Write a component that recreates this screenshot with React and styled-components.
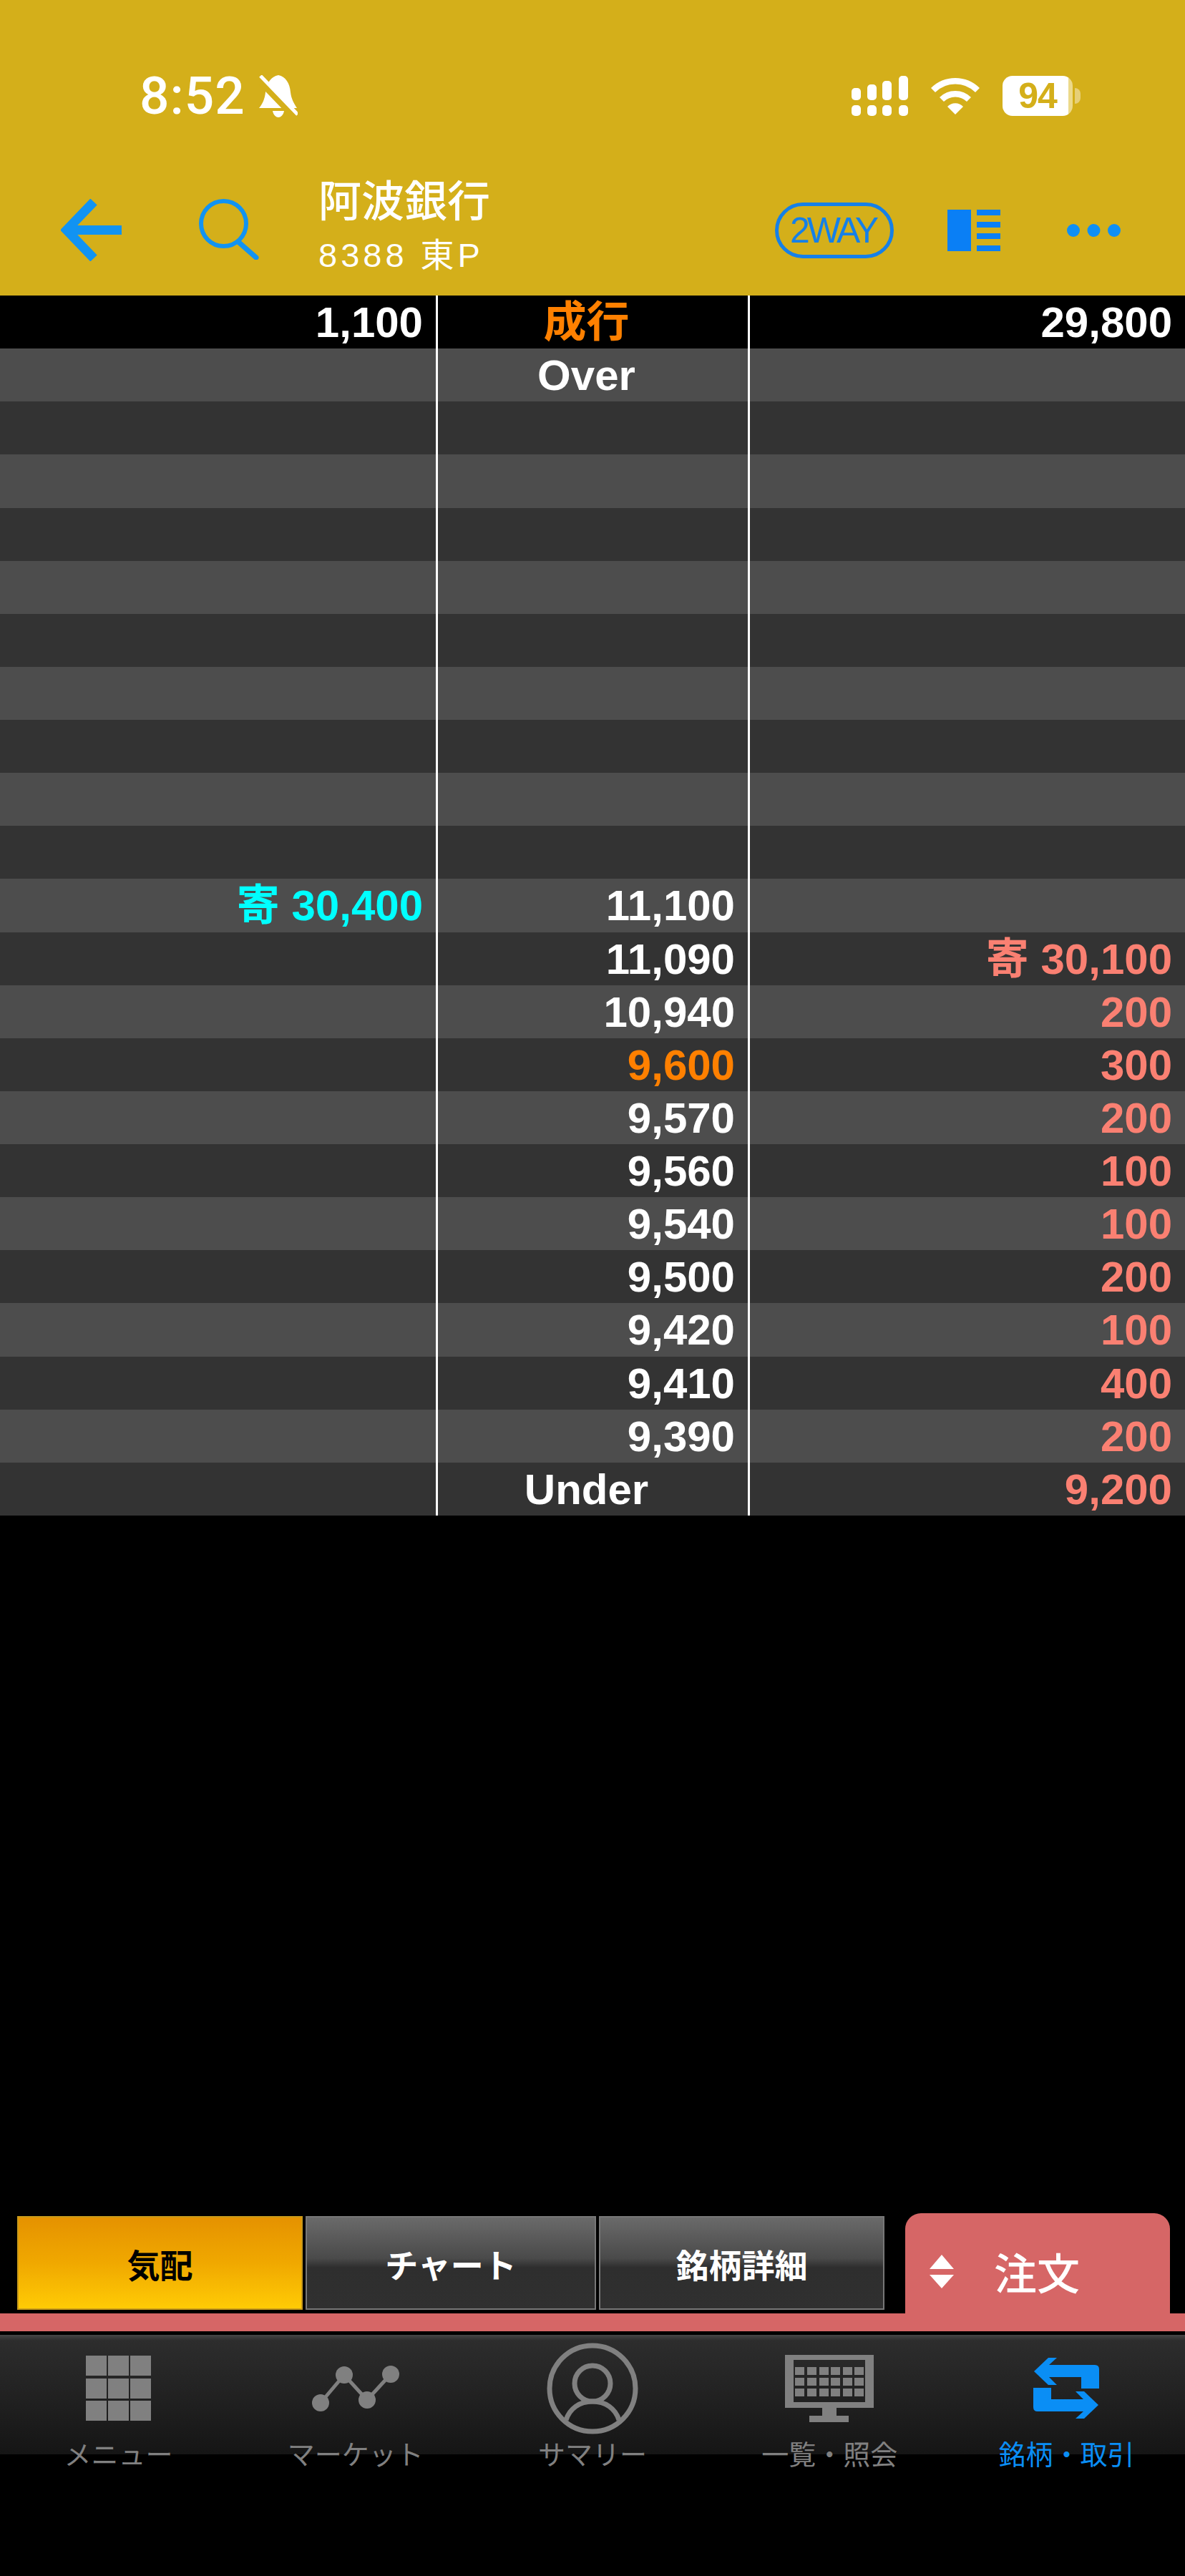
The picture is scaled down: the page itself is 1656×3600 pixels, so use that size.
// board screen (price ladder) for 8388
import React from "react";
import styled, { createGlobalStyle } from "styled-components";

const SANS = `"Liberation Sans", "Noto Sans CJK JP", sans-serif`;
const JP = `"Noto Sans CJK JP", "Liberation Sans", sans-serif`;

const rows = [
  { left: "1,100", mid: "成行", right: "29,800", top: true, midTone: "orange", center: true },
  { mid: "Over", center: true },
  {}, {}, {}, {}, {}, {}, {}, {}, {},
  { left: "寄 30,400", leftTone: "cyan", mid: "11,100" },
  { mid: "11,090", right: "寄 30,100" },
  { mid: "10,940", right: "200" },
  { mid: "9,600", midTone: "orange", right: "300" },
  { mid: "9,570", right: "200" },
  { mid: "9,560", right: "100" },
  { mid: "9,540", right: "100" },
  { mid: "9,500", right: "200" },
  { mid: "9,420", right: "100" },
  { mid: "9,410", right: "400" },
  { mid: "9,390", right: "200" },
  { mid: "Under", center: true, right: "9,200" },
];

const TONES = {
  white: "#ffffff",
  orange: "#ff8000",
  cyan: "#00ffff",
  salmon: "#fa8072",
};

const BackArrow = () => (
  <BackIcon viewBox="0 0 85 87">
    <path d="M46 4 L8 43.5 L46 83" fill="none" stroke="#1193f2" strokeWidth="13" />
    <rect x="8" y="37" width="77" height="13" fill="#1193f2" />
  </BackIcon>
);

const Magnifier = () => (
  <SearchIcon viewBox="0 0 84 85">
    <circle cx="34.5" cy="34.5" r="31.5" fill="none" stroke="#1193f2" strokeWidth="6" />
    <path d="M55 60 L80 82" stroke="#1193f2" strokeWidth="7" strokeLinecap="round" />
  </SearchIcon>
);

const BellSlash = () => (
  <BellIcon viewBox="0 0 55 59">
    <path d="M28 0 C38 2 44 11 45 24 C46 33 50 40 54 46 L1 46 C6 40 9 33 10 24 C11 11 18 2 28 0 Z" fill="#fff" />
    <path d="M20 50 L36 50 C35 56 31 59 28 59 C25 59 21 56 20 50 Z" fill="#fff" />
    <path d="M-1 5 L54 62" stroke="#d4af1a" strokeWidth="9" />
    <path d="M3 1 L55 55" stroke="#fff" strokeWidth="5" />
  </BellIcon>
);

const Signal = () => (
  <StatusIcon width="79" height="56" viewBox="0 0 79 56">
    <g fill="#fff">
      <rect x="0" y="17" width="13" height="17" rx="5" />
      <rect x="22" y="12" width="13" height="22" rx="5" />
      <rect x="43" y="7" width="13" height="27" rx="5" />
      <rect x="66" y="0" width="13" height="34" rx="5" />
      <rect x="0" y="41" width="13" height="15" rx="5" />
      <rect x="22" y="41" width="13" height="15" rx="5" />
      <rect x="43" y="41" width="13" height="15" rx="5" />
      <rect x="66" y="41" width="13" height="15" rx="5" />
    </g>
  </StatusIcon>
);

const Wifi = () => (
  <StatusIcon width="70" height="52" viewBox="0 0 70 52">
    <path d="M4 18 A44 44 0 0 1 66 18" fill="none" stroke="#fff" strokeWidth="8.5" />
    <path d="M16 31 A27 27 0 0 1 54 31" fill="none" stroke="#fff" strokeWidth="8.5" />
    <path d="M35 52 L24 41 A15 15 0 0 1 46 41 Z" fill="#fff" />
  </StatusIcon>
);

const ListLayout = () => (
  <LayoutIcon viewBox="0 0 74 58">
    <g fill="#0a7ff5">
      <rect x="0" y="0" width="33" height="58" />
      <rect x="41" y="0" width="33" height="8" />
      <rect x="41" y="17" width="33" height="8" />
      <rect x="41" y="33" width="33" height="8" />
      <rect x="41" y="50" width="33" height="8" />
    </g>
  </LayoutIcon>
);

const MoreDots = () => (
  <DotsIcon viewBox="0 0 75 20">
    <g fill="#0f8ff5">
      <circle cx="9" cy="10" r="9" />
      <circle cx="37.5" cy="10" r="9" />
      <circle cx="66" cy="10" r="9" />
    </g>
  </DotsIcon>
);

const SortArrows = () => (
  <svg width="34" height="47" viewBox="0 0 34 47">
    <path d="M17 0 L34 20 L0 20 Z" fill="#fff" />
    <path d="M0 28 L34 28 L17 47 Z" fill="#fff" />
  </svg>
);

const MenuIcon = () => (
  <svg width="91" height="91" viewBox="0 0 91 91">
    <g fill="#808080">
      {[0, 31, 62].map((x) =>
        [0, 32, 63].map((y) => <rect key={`${x}-${y}`} x={x} y={y} width="29" height="28" />)
      )}
    </g>
  </svg>
);

const MarketIcon = () => (
  <svg width="122" height="64" viewBox="0 0 122 64">
    <path d="M12 52 L45 13 L77 48 L110 12" fill="none" stroke="#808080" strokeWidth="5" />
    <g fill="#808080">
      <circle cx="12" cy="52" r="12" />
      <circle cx="45" cy="13" r="12" />
      <circle cx="77" cy="48" r="12" />
      <circle cx="110" cy="12" r="12" />
    </g>
  </svg>
);

const SummaryIcon = () => (
  <svg width="128" height="128" viewBox="0 0 128 128">
    <g fill="none" stroke="#808080" strokeWidth="7">
      <circle cx="64" cy="64" r="60" />
      <circle cx="64" cy="57" r="25" />
      <path d="M27 108 C32 92 46 82 64 82 C82 82 96 92 101 108" />
    </g>
  </svg>
);

const MonitorIcon = () => (
  <svg width="124" height="94" viewBox="0 0 124 94">
    <path d="M0 0 H124 V74 H0 Z M12 7 V66 H112 V7 Z" fill="#808080" fillRule="evenodd" />
    <rect x="52" y="74" width="20" height="12" fill="#808080" />
    <rect x="34" y="85" width="55" height="9" fill="#808080" />
    <g fill="#808080">
      {[17, 32, 47].map((y) =>
        [14, 31, 48, 64, 81, 97].map((x) => <rect key={`${x}-${y}`} x={x} y={y} width="13" height="11" />)
      )}
    </g>
  </svg>
);

const SWAP_PATH = "M1 19 L21 0 L33 0 L22 10 L86 10 Q92 10 92 16 L92 43 L67 43 L67 27 L22 27 L33 38 L21 38 Z";

const SwapIcon = () => (
  <svg width="92" height="85" viewBox="0 0 92 85">
    <path d={SWAP_PATH} fill="#0a8ef5" />
    <path d={SWAP_PATH} fill="#0a8ef5" transform="rotate(180 46 42.5)" />
  </svg>
);

const tabItems = [
  { label: "メニュー", icon: <MenuIcon /> },
  { label: "マーケット", icon: <MarketIcon /> },
  { label: "サマリー", icon: <SummaryIcon /> },
  { label: "一覧・照会", icon: <MonitorIcon /> },
  { label: "銘柄・取引", icon: <SwapIcon />, active: true },
];

const App = () => {
  return (
    <Page>
      <GlobalStyle />
      <Header>
        <StatusBar>
          <Clock>8:52</Clock>
          <BellSlash />
          <StatusRight>
            <Signal />
            <Wifi />
            <Battery>
              <BatteryBody>94</BatteryBody>
              <BatteryNub />
            </Battery>
          </StatusRight>
        </StatusBar>
        <NavRow>
          <BackArrow />
          <Magnifier />
          <TitleBlock>
            <StockName>阿波銀行</StockName>
            <StockCode>8388 東P</StockCode>
          </TitleBlock>
          <NavRight>
            <TwoWay>2WAY</TwoWay>
            <ListLayout />
            <MoreDots />
          </NavRight>
        </NavRow>
      </Header>

      <Board>
        {rows.map((r, i) => (
          <Row key={i} $top={r.top} $light={i % 2 === 1}>
            <Cell $tone={r.leftTone || "white"} $line>
              {r.left}
            </Cell>
            <Cell $tone={r.midTone || "white"} $line $center={r.center}>
              {r.mid}
            </Cell>
            <Cell $tone={r.top ? "white" : "salmon"}>{r.right}</Cell>
          </Row>
        ))}
      </Board>

      <Bottom>
        <TabRow>
          <Tabs>
            <Tab $active>気配</Tab>
            <Tab>チャート</Tab>
            <Tab>銘柄詳細</Tab>
          </Tabs>
          <OrderTab>
            <SortArrows />
            <OrderText>注文</OrderText>
          </OrderTab>
        </TabRow>
        <RedBar />
        <TabBar>
          {tabItems.map((t) => (
            <TabItem key={t.label} $active={t.active}>
              <TabIcon>{t.icon}</TabIcon>
              <TabLabel>{t.label}</TabLabel>
            </TabItem>
          ))}
        </TabBar>
      </Bottom>
    </Page>
  );
};

const GlobalStyle = createGlobalStyle`
  html, body {
    margin: 0;
    padding: 0;
    background: #000;
  }
  * {
    box-sizing: border-box;
  }
`;

const Page = styled.div`
  width: 1656px;
  height: 3600px;
  display: flex;
  flex-direction: column;
  background: #000;
  font-family: ${SANS};
  overflow: hidden;
`;

const Header = styled.div`
  height: 413px;
  padding-top: 100px;
  background: #d4af1a;
  color: #fff;
`;

const StatusBar = styled.div`
  height: 68px;
  display: flex;
  align-items: center;
  padding: 0 146px 0 195px;
`;

const Clock = styled.div`
  font-family: Roboto, sans-serif;
  font-weight: 500;
  font-size: 73px;
  line-height: 68px;
  letter-spacing: 1px;
`;

const BellIcon = styled.svg`
  width: 55px;
  height: 59px;
  margin-left: 18px;
  overflow: hidden;
`;

const StatusRight = styled.div`
  margin-left: auto;
  display: flex;
  align-items: center;
`;

const StatusIcon = styled.svg`
  margin-right: 31px;
  display: block;
`;

const Battery = styled.div`
  display: flex;
  align-items: center;
`;

const BatteryBody = styled.div`
  width: 98px;
  height: 56px;
  border-radius: 14px;
  background: linear-gradient(90deg, #fff 94%, #ecd98a 94%);
  color: #d4af1a;
  font-weight: 700;
  font-size: 50px;
  letter-spacing: -1px;
  line-height: 56px;
  text-align: center;
`;

const BatteryNub = styled.div`
  width: 8px;
  height: 22px;
  margin-left: 3px;
  border-radius: 0 8px 8px 0;
  background: #e6cf78;
`;

const NavRow = styled.div`
  height: 245px;
  padding: 76px 90px 0 85px;
  display: flex;
  align-items: flex-start;
`;

const BackIcon = styled.svg`
  width: 85px;
  height: 87px;
  margin-top: 34px;
`;

const SearchIcon = styled.svg`
  width: 84px;
  height: 85px;
  margin-left: 108px;
  margin-top: 34px;
`;

const TitleBlock = styled.div`
  margin-left: 83px;
`;

const StockName = styled.div`
  font-family: ${JP};
  font-weight: 500;
  font-size: 60px;
  line-height: 66px;
`;

const StockCode = styled.div`
  font-size: 47px;
  line-height: 50px;
  letter-spacing: 5px;
  margin-top: 22px;
  font-family: ${SANS};
  white-space: nowrap;
`;

const NavRight = styled.div`
  margin-left: auto;
  display: flex;
  align-items: center;
  height: 87px;
  margin-top: 34px;
`;

const TwoWay = styled.div`
  width: 166px;
  height: 78px;
  border: 5px solid #1580e8;
  border-radius: 39px;
  color: #1580e8;
  font-size: 50px;
  letter-spacing: -4px;
  line-height: 68px;
  text-align: center;
  padding-right: 4px;
`;

const LayoutIcon = styled.svg`
  width: 74px;
  height: 58px;
  margin-left: 75px;
`;

const DotsIcon = styled.svg`
  width: 75px;
  height: 20px;
  margin-left: 93px;
`;

const Board = styled.div`
  display: grid;
  grid-auto-rows: 74.13px;
`;

const Row = styled.div`
  display: grid;
  grid-template-columns: 612px 436px 1fr;
  background: ${(p) => (p.$top ? "#000" : p.$light ? "#4d4d4d" : "#333")};
`;

const Cell = styled.div`
  display: flex;
  align-items: center;
  justify-content: ${(p) => (p.$center ? "center" : "flex-end")};
  padding: 2px 18px 0 0;
  font-size: 60px;
  line-height: 72px;
  font-weight: 700;
  color: ${(p) => TONES[p.$tone]};
  border-right: ${(p) => (p.$line ? "3px solid #fff" : "none")};
  white-space: pre;
`;

const Bottom = styled.div`
  margin-top: auto;
  height: 507px;
  display: flex;
  flex-direction: column;
`;

const TabRow = styled.div`
  height: 140px;
  display: flex;
  align-items: flex-start;
  padding-left: 24px;
`;

const Tabs = styled.div`
  margin-top: 4px;
  display: grid;
  grid-template-columns: 399px 406px 399px;
  column-gap: 4px;
`;

const Tab = styled.div`
  height: 131px;
  display: flex;
  align-items: center;
  justify-content: center;
  font-family: ${JP};
  font-size: 46px;
  font-weight: 700;
  color: ${(p) => (p.$active ? "#000" : "#fff")};
  border: 2px solid ${(p) => (p.$active ? "#c99a1a" : "#777")};
  background: ${(p) =>
    p.$active
      ? "linear-gradient(180deg, #e59200 0%, #f0a800 50%, #ffcb05 100%)"
      : "linear-gradient(180deg, #6a6a6a 0%, #4a4a4a 45%, #2e2e2e 55%, #303030 100%)"};
`;

const OrderTab = styled.div`
  width: 370px;
  height: 140px;
  margin-left: 29px;
  border-radius: 22px 22px 0 0;
  background: #d66666;
  display: flex;
  align-items: center;
  padding: 22px 0 0 34px;
`;

const OrderText = styled.div`
  margin-left: 56px;
  font-family: ${JP};
  font-size: 60px;
  font-weight: 500;
  line-height: 60px;
  color: #fff;
`;

const RedBar = styled.div`
  height: 25px;
  background: #d66666;
`;

const TabBar = styled.div`
  margin-top: 5px;
  flex: 1;
  display: grid;
  grid-template-columns: repeat(5, 1fr);
  align-content: start;
  padding-top: 7px;
  background: linear-gradient(
    180deg,
    #464646 0,
    #2d2d2d 8px,
    #151515 167px,
    #000 167px
  );
`;

const TabItem = styled.div`
  display: flex;
  flex-direction: column;
  align-items: center;
  color: ${(p) => (p.$active ? "#0a8ef5" : "#808080")};
`;

const TabIcon = styled.div`
  height: 135px;
  display: flex;
  align-items: center;
`;

const TabLabel = styled.div`
  font-family: ${JP};
  font-size: 38px;
  line-height: 46px;
`;

export default App;
